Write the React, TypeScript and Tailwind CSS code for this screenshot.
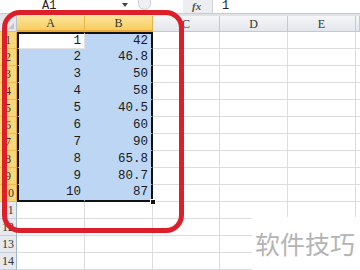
import React from 'react';

const values: [number, string][] = [
    [1, '42'],
    [2, '46.8'],
    [3, '50'],
    [4, '58'],
    [5, '40.5'],
    [6, '60'],
    [7, '90'],
    [8, '65.8'],
    [9, '80.7'],
    [10, '87'],
];

const mono = { fontFamily: '"Liberation Mono", "DejaVu Sans Mono", monospace' };
const serif = { fontFamily: '"Liberation Serif", "DejaVu Serif", serif' };

function RowHeader({ n, selected }: { n: number; selected: boolean }) {
    return (
        <div
            className={`w-[17px] shrink-0 flex items-center justify-center text-[12px] text-[#333] border-r border-b ${
                selected
                    ? 'bg-[#f9d67a] border-r-[#e2a93a] border-b-[#e8bb55]'
                    : 'bg-[#e6e9ee] border-r-[#9eb6ce] border-b-[#c9ced6]'
            }`}
            style={serif}
        >
            {n}
        </div>
    );
}

export default function App() {
    return (
        <div className="relative w-[360px] h-[270px] overflow-hidden bg-white select-none">
            {/* formula bar */}
            <div className="h-[13px] flex bg-white">
                <div className="w-[133px] relative">
                    <span className="absolute left-[42px] top-0 text-[12px] leading-[12px] text-[#222]" style={mono}>
                        A1
                    </span>
                    <span className="absolute left-[122px] top-[3px] w-0 h-0 border-l-[3px] border-r-[3px] border-t-[4px] border-l-transparent border-r-transparent border-t-[#444]" />
                </div>
                <div className="w-[50px] relative">
                    <div className="absolute left-[5px] top-[-6px] w-[13px] h-[16px] rounded-full border border-[#c8ccd2] bg-[#eef0f3]" />
                </div>
                <div className="w-[29px] bg-[#eceef1] relative">
                    <span className="absolute left-[9px] top-0 text-[11px] leading-[12px] italic font-bold text-[#555]" style={serif}>
                        fx
                    </span>
                </div>
                <div className="flex-1 relative border-l border-[#d0d4da]">
                    <span className="absolute left-[9px] top-0 text-[12px] leading-[12px] text-[#222]" style={mono}>
                        1
                    </span>
                </div>
            </div>
            <div className="h-[3px] bg-[#dfe3e8] border-t border-[#c6cbd2]" />

            {/* column headers */}
            <div className="h-[16px] flex">
                <div className="w-[17px] shrink-0 relative bg-[#e4e7ec] border-r border-b border-[#b9c3cf]">
                    <span className="absolute right-[2px] bottom-[2px] w-0 h-0 border-l-[6px] border-t-[6px] border-l-transparent border-t-transparent border-r-0 border-b-[6px] border-b-[#c1c6cd]" />
                </div>
                {['A', 'B'].map((c) => (
                    <div
                        key={c}
                        className="w-[68px] shrink-0 flex items-center justify-center text-[12px] text-[#333] bg-gradient-to-b from-[#fde59a] to-[#f7cc5c] border-r border-[#e2b650] border-b-2 border-b-[#eda93a]"
                        style={serif}
                    >
                        {c}
                    </div>
                ))}
                {['C', 'D', 'E', ''].map((c, i) => (
                    <div
                        key={i}
                        className={`${i === 0 ? 'w-[67px]' : i === 3 ? 'flex-1' : 'w-[68px]'} shrink-0 flex items-center justify-center text-[12px] text-[#333] bg-gradient-to-b from-[#f5f6f8] to-[#e3e6eb] border-r border-b border-[#c3c9d1]`}
                        style={serif}
                    >
                        {c}
                    </div>
                ))}
            </div>

            {/* data rows */}
            {values.map(([a, b], i) => (
                <div key={a} className="h-[17px] flex">
                    <RowHeader n={a} selected />
                    <div
                        className={`w-[68px] shrink-0 flex items-center justify-end pr-[3px] text-[12.5px] text-[#1a1a1a] border-b border-r ${
                            i === 0 ? 'bg-white border-[#e3e3e3]' : 'bg-[#bcd6f3] border-[#bcd6f3]'
                        } border-l-2 border-l-[#111] ${i === 9 ? 'border-b-2 border-b-[#111]' : ''} ${i === 0 ? 'border-t-2 border-t-[#111]' : ''}`}
                        style={mono}
                    >
                        {a}
                    </div>
                    <div
                        className={`w-[68px] shrink-0 flex items-center justify-end pr-[3px] text-[12.5px] text-[#1a1a1a] bg-[#bcd6f3] border-b border-[#bcd6f3] border-r-2 border-r-[#111] ${
                            i === 9 ? 'border-b-2 border-b-[#111]' : ''
                        } ${i === 0 ? 'border-t-2 border-t-[#111]' : ''}`}
                        style={mono}
                    >
                        {b}
                    </div>
                    <div className="w-[67px] shrink-0 border-r border-b border-[#dadcdf]" />
                    <div className="w-[68px] shrink-0 border-r border-b border-[#dadcdf]" />
                    <div className="w-[68px] shrink-0 border-r border-b border-[#dadcdf]" />
                    <div className="flex-1 border-b border-[#dadcdf]" />
                </div>
            ))}

            {/* empty rows */}
            {[11, 12, 13, 14].map((n) => (
                <div key={n} className="h-[17px] flex">
                    <RowHeader n={n} selected={false} />
                    <div className="w-[68px] shrink-0 border-r border-b border-[#dadcdf]" />
                    <div className="w-[68px] shrink-0 border-r border-b border-[#dadcdf]" />
                    <div className="w-[67px] shrink-0 border-r border-b border-[#dadcdf]" />
                    <div className="w-[68px] shrink-0 border-r border-b border-[#dadcdf]" />
                    <div className="w-[68px] shrink-0 border-r border-b border-[#dadcdf]" />
                    <div className="flex-1 border-b border-[#dadcdf]" />
                </div>
            ))}

            {/* fill handle */}
            <div className="absolute left-[150px] top-[199px] w-[6px] h-[6px] bg-[#111] border border-white" />

            {/* red annotation */}
            <div className="absolute left-[2px] top-[10px] w-[182px] h-[223px] border-[5px] border-[#dd1f2a] rounded-[18px]" />

            {/* watermark */}
            <div className="absolute left-[252px] top-[217px] w-[108px] h-[53px] bg-white flex items-center pl-[3px]">
                <span
                    className="text-[25px] text-[#b4b4b4] leading-none tracking-[0px]"
                    style={{ fontFamily: '"Noto Sans CJK SC", "Noto Sans", sans-serif' }}
                >
                    软件技巧
                </span>
            </div>
        </div>
    );
}
